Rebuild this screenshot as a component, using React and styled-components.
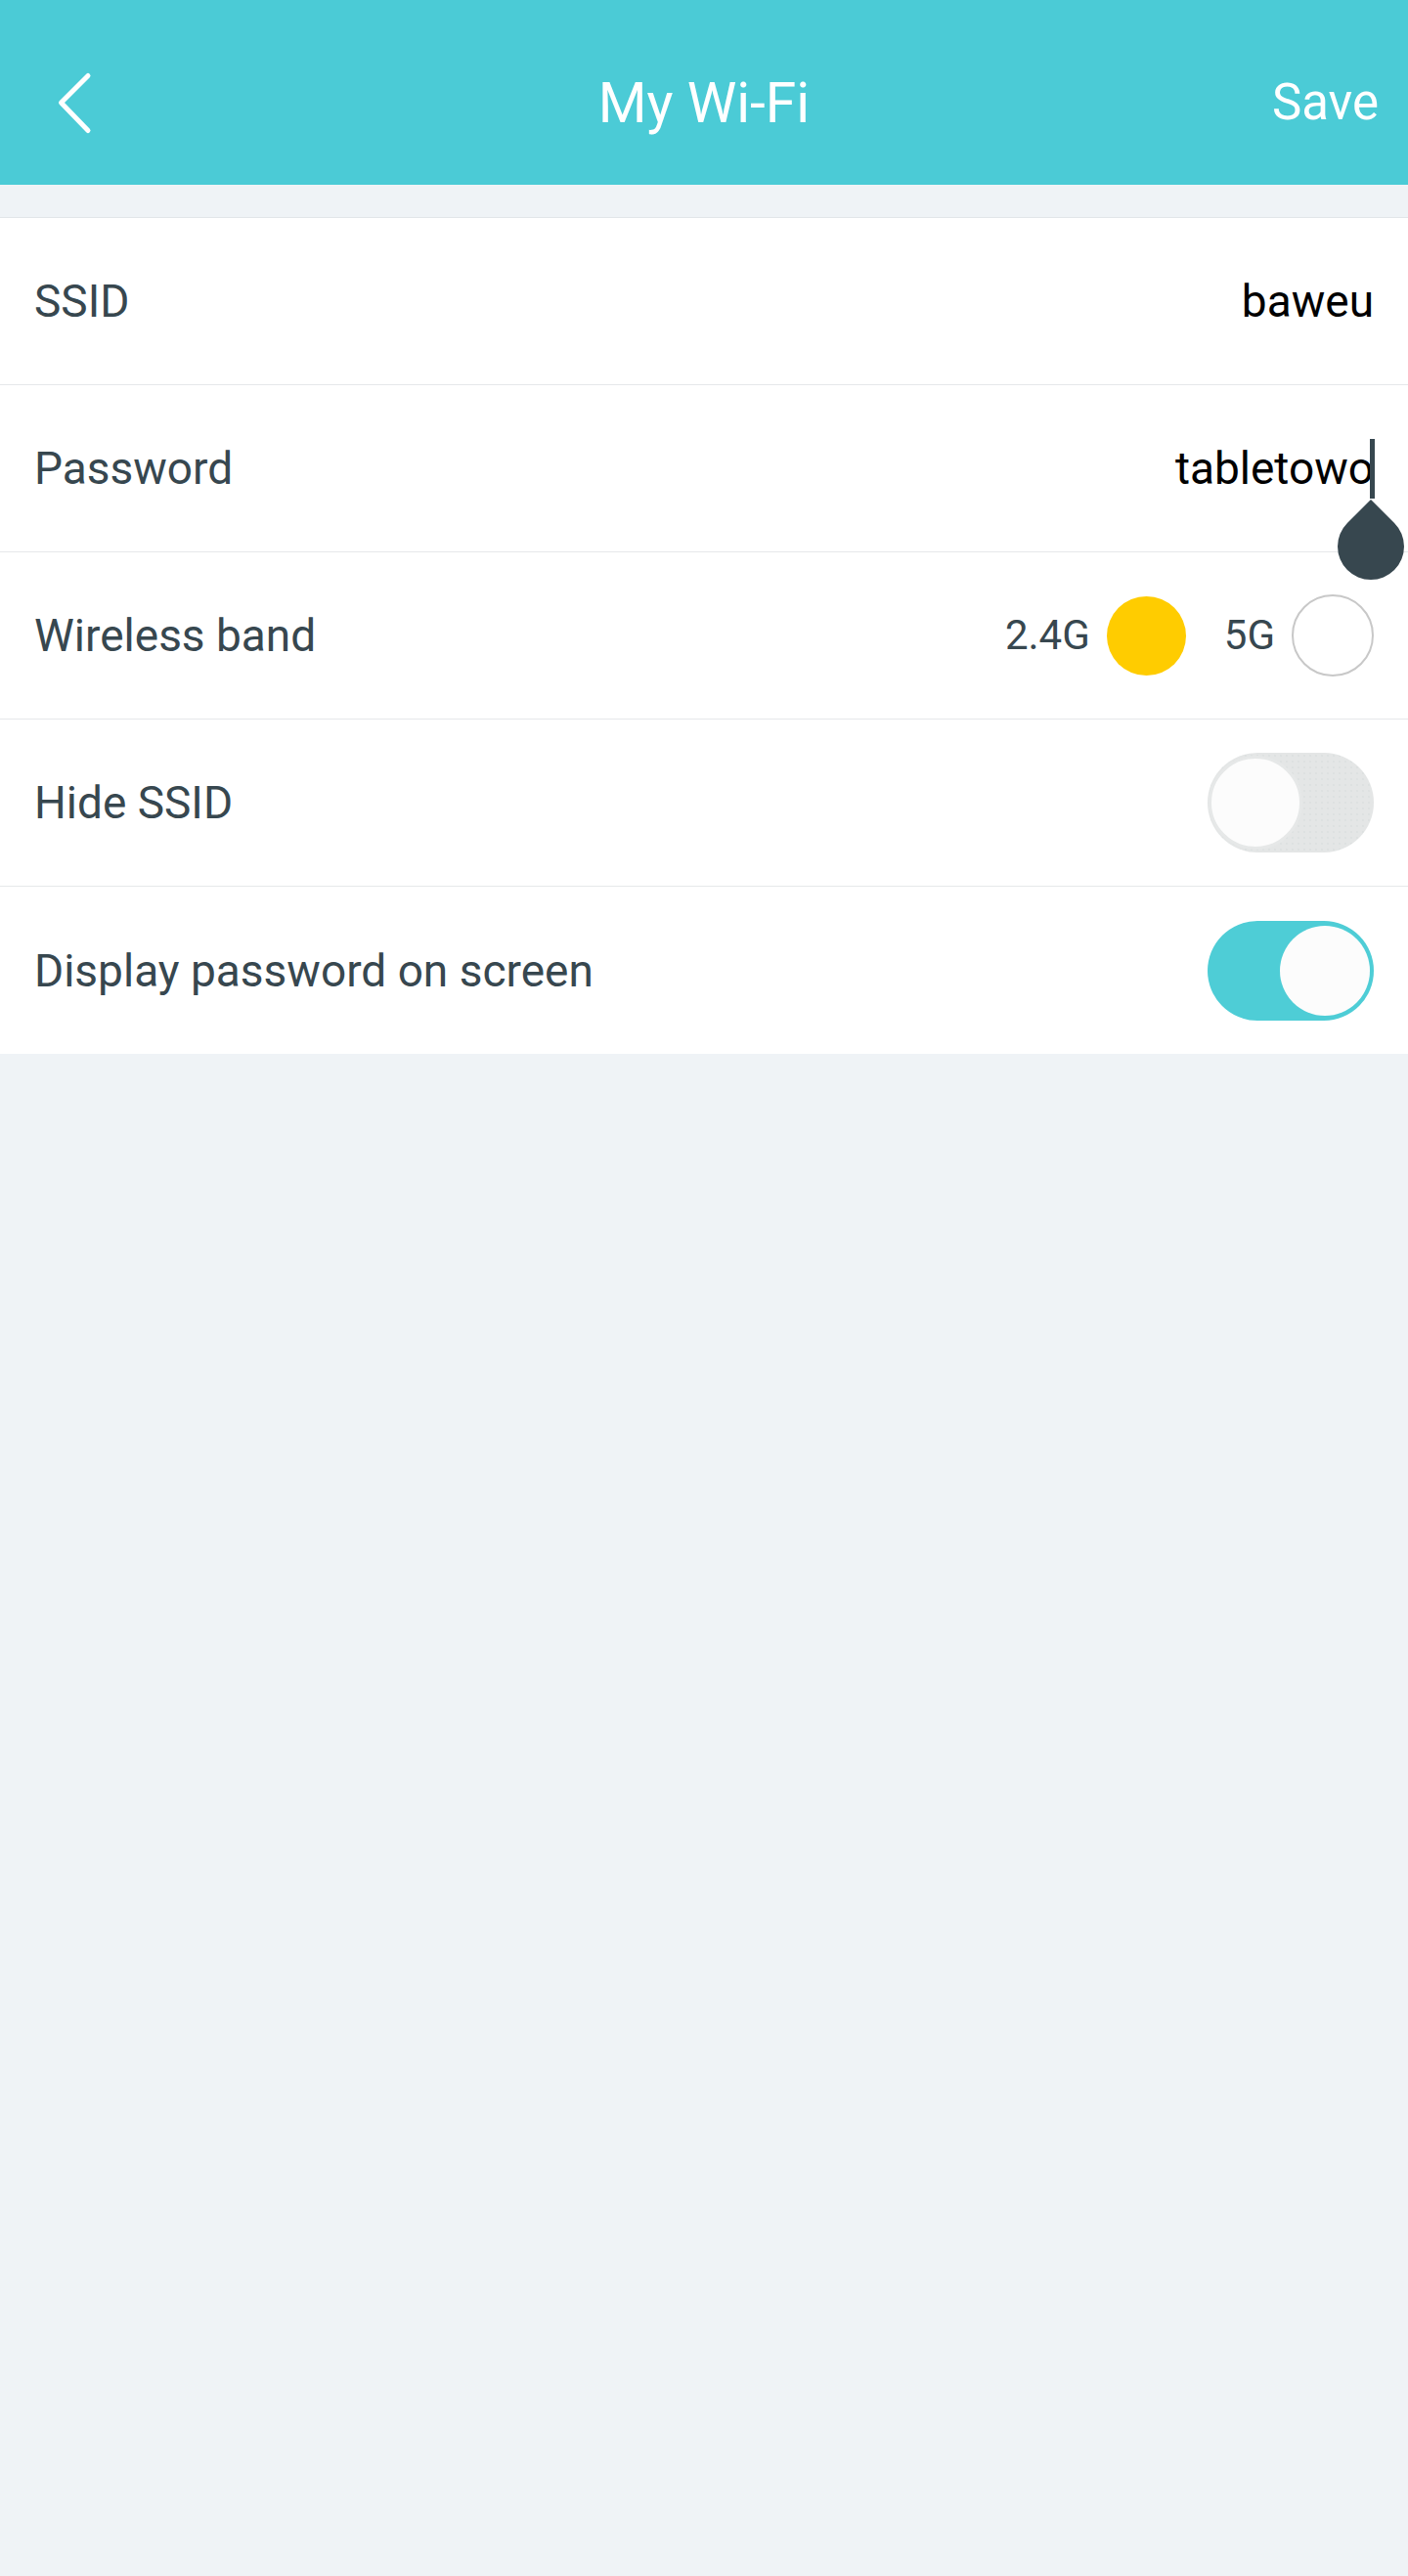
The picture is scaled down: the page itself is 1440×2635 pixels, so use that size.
import React from "react"
import styled, { createGlobalStyle } from "styled-components"

const GlobalStyle = createGlobalStyle`
  html, body {
    margin: 0;
    padding: 0;
    background: #eff3f6;
    font-family: Roboto, "Noto Sans", "Liberation Sans", sans-serif;
  }
  * { box-sizing: border-box; }
`

const Page = styled.div`
  min-height: 2635px;
  background: #eff3f6;
`

const Header = styled.header`
  height: 189px;
  background: #4bcbd6;
  display: grid;
  grid-template-columns: 1fr auto 1fr;
  align-items: center;
  padding: 21px 30px 0 30px;
  color: #fff;
`

const BackButton = styled.button`
  justify-self: start;
  margin-left: 26px;
  background: none;
  border: 0;
  padding: 0;
  display: flex;
  cursor: pointer;
`

const Title = styled.h1`
  margin: 0;
  font-size: 57px;
  font-weight: 400;
  line-height: 67px;
`

const SaveButton = styled.button`
  justify-self: end;
  background: none;
  border: 0;
  padding: 0;
  color: #fff;
  font-family: inherit;
  font-size: 51px;
  line-height: 60px;
  cursor: pointer;
`

const Band = styled.div`
  height: 34px;
  border-bottom: 1px solid #e2e6e9;
`

const List = styled.section`
  background: #fff;
`

const Row = styled.div`
  height: 171px;
  display: flex;
  align-items: center;
  justify-content: space-between;
  padding: 0 35px;
  border-bottom: ${(p) => (p.$last ? "none" : "1px solid #e6e8ea")};
`

const Label = styled.span`
  font-size: 46px;
  line-height: 54px;
  color: #37474f;
`

const Value = styled.span`
  position: relative;
  font-size: 46px;
  line-height: 54px;
  color: #000;
`

const Cursor = styled.span`
  position: absolute;
  right: -1px;
  top: -3px;
  width: 5px;
  height: 61px;
  background: #37474f;
`

const Handle = styled.span`
  position: absolute;
  right: -31px;
  top: 73px;
  width: 68px;
  height: 68px;
  background: #37474f;
  border-radius: 0 50% 50% 50%;
  transform: rotate(45deg);
  z-index: 2;
`

const Bands = styled.div`
  display: flex;
  align-items: center;
`

const BandText = styled.span`
  font-size: 42px;
  line-height: 50px;
  color: #37474f;
  margin-right: 17px;
`

const Radio = styled.span`
  width: ${(p) => (p.$checked ? 81 : 84)}px;
  height: ${(p) => (p.$checked ? 81 : 84)}px;
  border-radius: 50%;
  background: ${(p) => (p.$checked ? "#ffcc00" : "#fff")};
  border: ${(p) => (p.$checked ? "none" : "2.5px solid #c8c8c8")};
  margin-right: ${(p) => (p.$gap ? 39 : 0)}px;
`

const Track = styled.span`
  position: relative;
  width: 170px;
  height: 102px;
  border-radius: 51px;
  background: ${(p) =>
    p.$on
      ? "#4ecdd6"
      : "radial-gradient(#d6d9d9 0.6px, transparent 0.8px) 0 0 / 6px 6px, #e4e6e6"};
`

const Knob = styled.span`
  position: absolute;
  top: ${(p) => (p.$on ? 5 : 3)}px;
  left: ${(p) => (p.$on ? "auto" : "1px")};
  right: ${(p) => (p.$on ? "4px" : "auto")};
  width: ${(p) => (p.$on ? 92 : 96)}px;
  height: ${(p) => (p.$on ? 92 : 96)}px;
  border-radius: 50%;
  background: #fcfcfc;
  border: ${(p) => (p.$on ? "none" : "3px solid #e6e8e8")};
`

const Toggle = ({ on }) => (
  <Track $on={on}>
    <Knob $on={on} />
  </Track>
)

const ChevronLeft = () => (
  <svg width="40" height="70" viewBox="0 0 40 70" fill="none">
    <path
      d="M34 7.5 L6.5 35 L34 63.5"
      stroke="#fff"
      strokeWidth="5"
      strokeLinecap="round"
      strokeLinejoin="round"
    />
  </svg>
)

const App = () => {
  return (
    <Page>
      <GlobalStyle />
      <Header>
        <BackButton aria-label="Back">
          <ChevronLeft />
        </BackButton>
        <Title>My Wi-Fi</Title>
        <SaveButton>Save</SaveButton>
      </Header>
      <Band />
      <List>
        <Row>
          <Label>SSID</Label>
          <Value>baweu</Value>
        </Row>
        <Row>
          <Label>Password</Label>
          <Value>
            tabletowo
            <Cursor />
            <Handle />
          </Value>
        </Row>
        <Row>
          <Label>Wireless band</Label>
          <Bands>
            <BandText>2.4G</BandText>
            <Radio $checked $gap />
            <BandText>5G</BandText>
            <Radio />
          </Bands>
        </Row>
        <Row>
          <Label>Hide SSID</Label>
          <Toggle on={false} />
        </Row>
        <Row $last>
          <Label>Display password on screen</Label>
          <Toggle on />
        </Row>
      </List>
    </Page>
  )
}

export default App
